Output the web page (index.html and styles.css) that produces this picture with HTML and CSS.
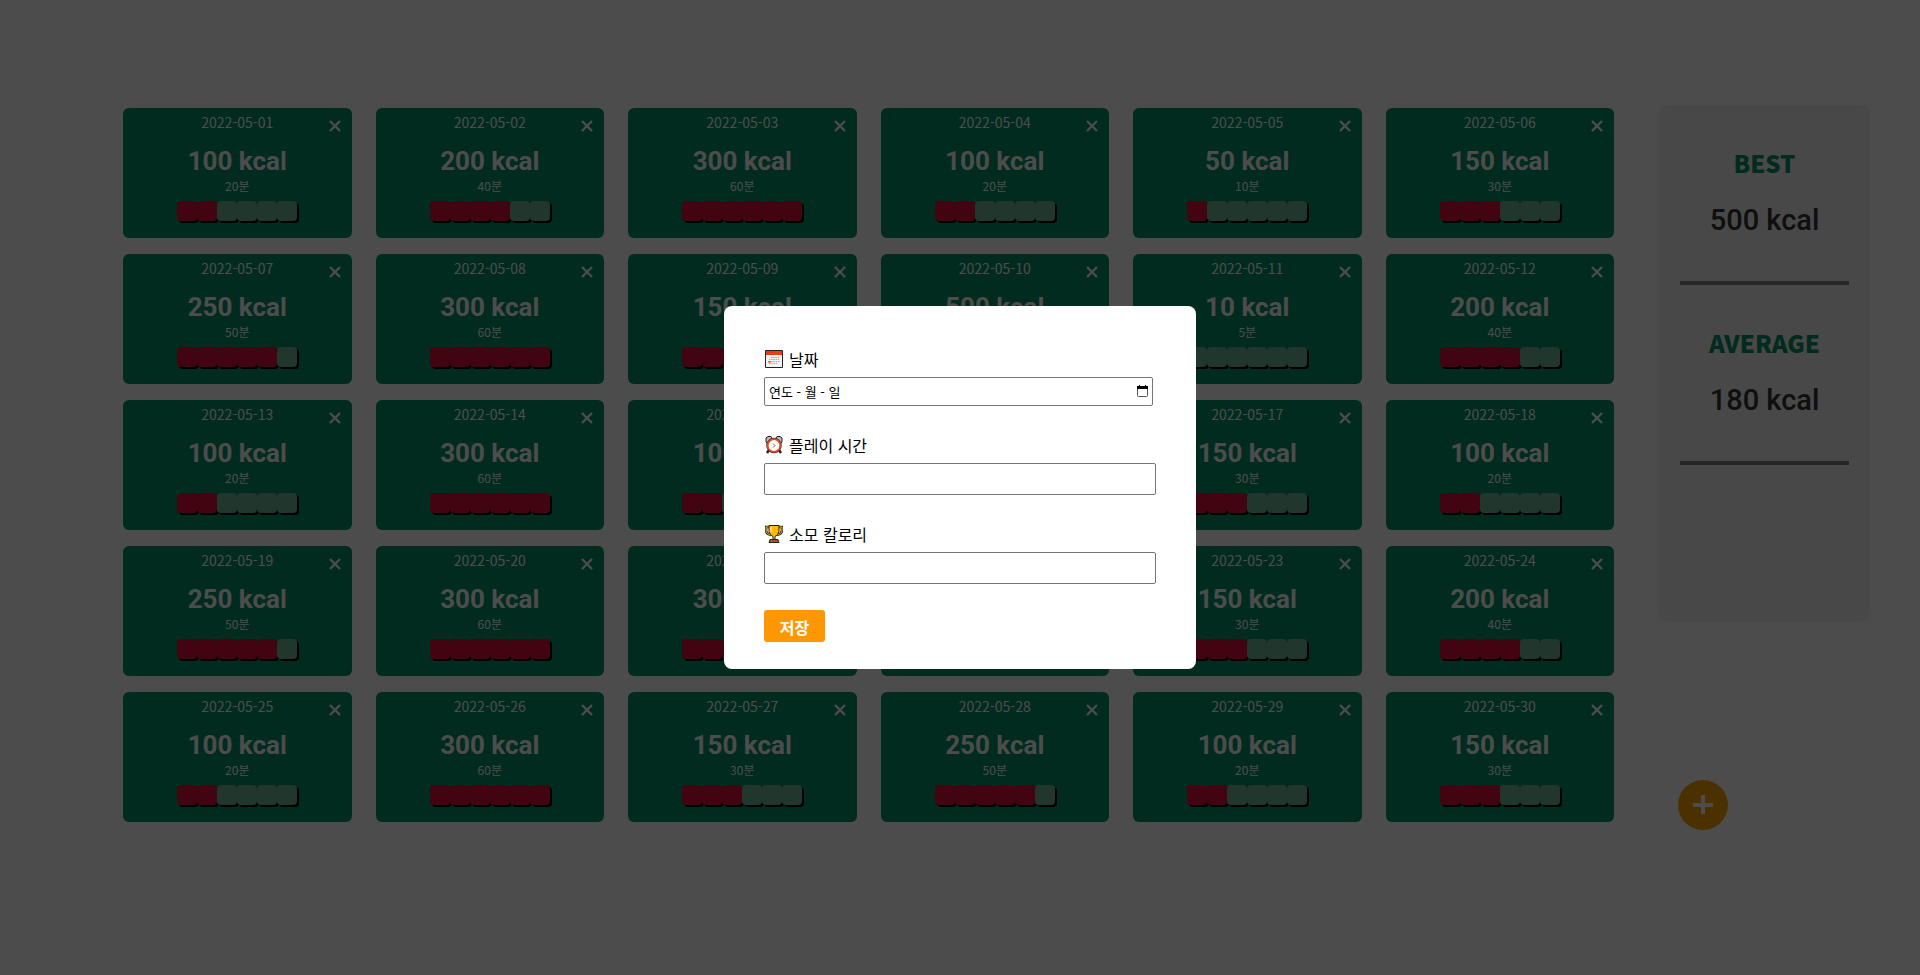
FILE: index.html
```html
<!DOCTYPE html>
<html lang="ko">
<head>
<meta charset="utf-8">
<title>운동 기록</title>
<link rel="stylesheet" href="styles.css">
</head>
<body>
<main class="page">
  <section class="records" id="records"></section>
  <aside class="summary">
    <section class="stat"><h2 class="stat-title">BEST</h2><p class="stat-value">500 kcal</p></section>
    <section class="stat"><h2 class="stat-title">AVERAGE</h2><p class="stat-value">180 kcal</p></section>
  </aside>
</main>
<button class="add" type="button" aria-label="추가"><svg width="20" height="20" viewBox="0 0 20 20"><path d="M10 0v19M0 10h20" stroke="currentColor" stroke-width="4"/></svg></button>
<div class="backdrop">
  <form class="modal">
    <div class="field">
      <label class="label" for="date"><svg class="emoji" viewBox="0 0 18 18"><path d="M.5.5h17v17H.5z" fill="#f3f3f3" stroke="#222"/><path d="M1 1h16v4H1z" fill="#f03a17"/><path d="M6 7.500h9M4 9.500h11M4 11.500h11M4 13.500h8" stroke="#aaa" stroke-dasharray="1.500 .7"/><path d="M3 11h3v1L4.500 13.500 3 12z" fill="#f26a50"/></svg>날짜</label>
      <div class="date-box">
        <input class="input input-date" id="date" type="text" value="연도 - 월 - 일">
        <svg class="calendar" width="11" height="12" viewBox="0 0 11 12"><path d="M.5 3v7.500a1 1 0 0 0 1 1h8a1 1 0 0 0 1-1V3" fill="none" stroke="#555"/><path d="M0 1h2V0h1v1h5V0h1v1h2v3H0z"/></svg>
      </div>
    </div>
    <div class="field">
      <label class="label" for="time"><svg class="emoji" viewBox="0 0 18 18"><path d="M4 14l-2 3M14 14l2 3" stroke="#222" stroke-width="2.500"/><path d="M1 6V2l2-1.500h3L7 2 2 7zM17 6V2l-2-1.500h-3L11 2l5 5z" fill="#bbb" stroke="#222"/><circle cx="9" cy="9.500" r="6.500" fill="#fff" stroke="#333" stroke-width="2.500"/><circle cx="9" cy="9.500" r="6.300" fill="#fff" stroke="#ed4426" stroke-width="1.800"/><path d="M8 7.500l2 2-2 2" fill="none" stroke="#666"/></svg>플레이 시간</label>
      <input class="input" id="time" type="text">
    </div>
    <div class="field">
      <label class="label" for="kcal"><svg class="emoji" viewBox="0 0 18 18"><path d="M4 2H1v3q0 4 5 5M14 2h3v3q0 4-5 5" fill="none" stroke="#222" stroke-width="2.600"/><path d="M4 2H1v3q0 4 5 5M14 2h3v3q0 4-5 5" fill="none" stroke="#ffb900"/><path d="M4 .5h10v6q-1 4-4 5v3H8v-3q-3-1-4-5z" fill="#ffb900" stroke="#222"/><path d="M6 2v5" stroke="#ffe08a" stroke-width="1.500"/><path d="M5 14.500h8l1 3H4z" fill="#a6572c" stroke="#222"/></svg>소모 칼로리</label>
      <input class="input" id="kcal" type="text">
    </div>
    <button class="save" type="submit">저장</button>
  </form>
</div>
<script src="records.js"></script>
</body>
</html>
```
FILE: styles.css
```css
* { box-sizing: border-box; }
body {
  margin: 0;
  background: #fff;
  font-family: "Noto Sans CJK KR", "Noto Sans", sans-serif;
}
h2, p { margin: 0; }
button { padding: 0; border: 0; font-family: inherit; cursor: pointer; }

.page {
  display: flex;
  align-items: flex-start;
  gap: 45px;
  padding: 105px 50px 0 123px;
}
.records {
  flex: 1;
  display: grid;
  grid-template-columns: repeat(6, 1fr);
  gap: 16px 24px;
  padding-top: 3px;
}
.card {
  position: relative;
  display: flex;
  flex-direction: column;
  align-items: center;
  padding: 4px 0 17px;
  border-radius: 6px;
  background: #009065;
  color: #fff;
}
.card-date { font-size: 14px; line-height: 20px; }
.card-kcal {
  margin-top: 12px;
  font: bold 26px/34px Roboto, sans-serif;
}
.card-time { font-size: 12px; line-height: 16px; }
.bar { display: flex; margin-top: 7px; }
.cell {
  width: 20px;
  height: 20px;
  border-radius: 4px;
  background: #71b496;
  box-shadow: 2px 2px #000;
}
.cell-on { background: #d90e37; }
.close {
  position: absolute;
  top: 12px;
  right: 11px;
  width: 12px;
  height: 12px;
  background: none;
  color: #fff;
}
.close svg { display: block; }

.summary {
  width: 211px;
  min-height: 516px;
  padding: 0 21px;
  border-radius: 8px;
  background: #f0f0f0;
  text-align: center;
}
.stat { padding-top: 40px; border-bottom: 4px solid #808080; }
.stat-title { font-size: 24px; font-weight: 900; line-height: 36px; color: #009065; }
.stat-value {
  padding: 19px 0 41px;
  font: 500 29px/40px Roboto, sans-serif;
  color: #333;
}
.add {
  position: fixed;
  right: 10%;
  bottom: 145px;
  display: flex;
  align-items: center;
  justify-content: center;
  width: 50px;
  height: 50px;
  border-radius: 50%;
  background: #ffa500;
  color: #fff;
}
.backdrop {
  position: fixed;
  inset: 0;
  display: flex;
  align-items: center;
  justify-content: center;
  background: rgba(0, 0, 0, .7);
}
.modal {
  display: flex;
  flex-direction: column;
  align-items: flex-start;
  gap: 26px;
  width: 472px;
  padding: 40px 40px 27px;
  border-radius: 8px;
  background: #fff;
}
.field { display: flex; flex-direction: column; gap: 5px; width: 100%; }
.label {
  display: flex;
  align-items: center;
  gap: 6px;
  padding-left: 1px;
  font-size: 16px;
  font-weight: 400;
  line-height: 26px;
}
.emoji { width: 18px; height: 18px; }
.input {
  width: 100%;
  height: 32px;
  padding: 0 4px;
  border: 1px solid #767676;
  border-radius: 2px;
  background: #fff;
  font-family: inherit;
  font-size: 13px;
}
.date-box { position: relative; display: flex; padding-right: 3px; }
.input-date { height: 29px; color: #000; }
.calendar { position: absolute; right: 8px; top: 8px; }
.save {
  width: 61px;
  height: 32px;
  padding-top: 2px;
  border-radius: 3px;
  background: #ff9800;
  color: #fff;
  font-size: 16px;
  font-weight: 700;
}
```
FILE: records.js
```js
// [kcal, minutes] for each day of the month
const days = [
  [100, 20], [200, 40], [300, 60], [100, 20], [50, 10], [150, 30],
  [250, 50], [300, 60], [150, 30], [500, 60], [10, 5], [200, 40],
  [100, 20], [300, 60], [100, 20], [300, 60], [150, 30], [100, 20],
  [250, 50], [300, 60], [300, 60], [100, 20], [150, 30], [200, 40],
  [100, 20], [300, 60], [150, 30], [250, 50], [100, 20], [150, 30]
];
document.getElementById("records").innerHTML = days.map(([kcal, minutes], i) => {
  const date = "2022-05-" + String(i + 1).padStart(2, "0");
  const cells = [1, 2, 3, 4, 5, 6]
    .map(n => `<span class="cell${minutes >= n * 10 ? " cell-on" : ""}"></span>`).join("");
  return `<article class="card">
    <time class="card-date">${date}</time>
    <button class="close" type="button" aria-label="삭제"><svg width="12" height="12" viewBox="0 0 12 12"><path d="M1 1l10 10M11 1L1 11" stroke="currentColor" stroke-width="2.400"/></svg></button>
    <p class="card-kcal">${kcal} kcal</p>
    <p class="card-time">${minutes}분</p>
    <div class="bar">${cells}</div>
  </article>`;
}).join("");
```
